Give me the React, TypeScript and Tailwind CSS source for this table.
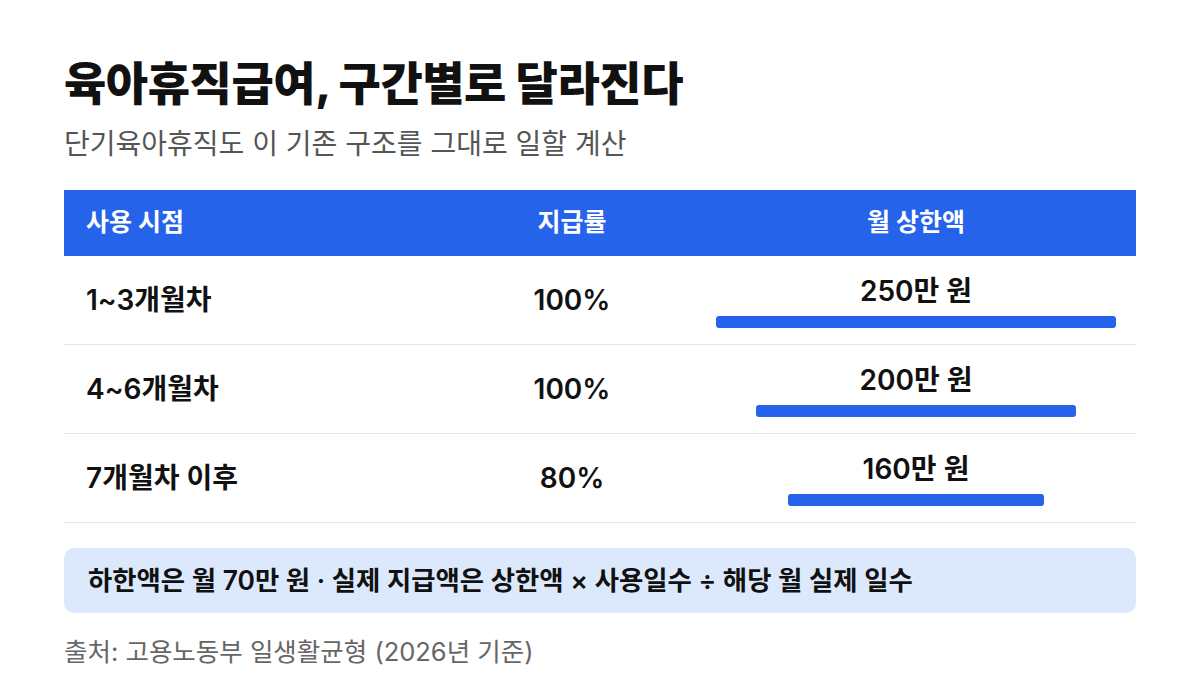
const rows = [
  { period: "1~3개월차", rate: "100%", cap: "250만 원", amount: 250 },
  { period: "4~6개월차", rate: "100%", cap: "200만 원", amount: 200 },
  { period: "7개월차 이후", rate: "80%", cap: "160만 원", amount: 160 },
];

const MAX_BAR = 400;

export default function App() {
  return (
    <div
      className="w-[1200px] h-[675px] bg-white px-16 pt-[54px] text-[#111111]"
      style={{ fontFamily: 'Inter, "Noto Sans CJK KR", sans-serif' }}
    >
      <h1 className="text-[46px] leading-[58px] font-extrabold tracking-[-0.01em]">
        육아휴직급여, 구간별로 달라진다
      </h1>
      <p className="mt-[14px] text-[28px] leading-[36px] text-[#555555]">
        단기육아휴직도 이 기존 구조를 그대로 일할 계산
      </p>

      <div className="mt-[28px]">
        <div className="grid grid-cols-[384px_248px_440px] h-[66px] items-center bg-[#2563eb] text-white text-[25px] font-bold">
          <div className="pl-[22px]">사용 시점</div>
          <div className="text-center">지급률</div>
          <div className="text-center">월 상한액</div>
        </div>
        {rows.map((r) => (
          <div
            key={r.period}
            className="grid grid-cols-[384px_248px_440px] h-[89px] items-center border-b border-[#e6e6e6] text-[28px] font-semibold"
          >
            <div className="pl-[22px]">{r.period}</div>
            <div className="text-center">{r.rate}</div>
            <div className="self-stretch flex flex-col items-center pt-[18px]">
              <div className="leading-[34px]">{r.cap}</div>
              <div
                className="mt-[8px] h-[12px] rounded-[3px] bg-[#2563eb]"
                style={{ width: (r.amount / 250) * MAX_BAR }}
              />
            </div>
          </div>
        ))}
      </div>

      <div className="mt-[25px] h-[65px] flex items-center rounded-[10px] bg-[#dce9fc] px-[24px] text-[26.4px] font-semibold">
        하한액은 월 70만 원 · 실제 지급액은 상한액 × 사용일수 ÷ 해당 월 실제 일수
      </div>

      <p className="mt-[22px] text-[25.5px] leading-[34px] text-[#666666]">
        출처: 고용노동부 일생활균형 (2026년 기준)
      </p>
    </div>
  );
}
